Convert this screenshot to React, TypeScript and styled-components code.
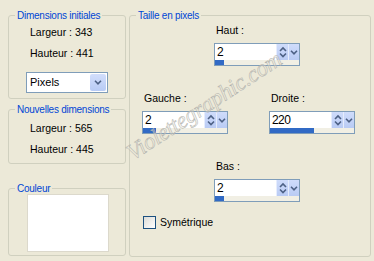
import React from 'react';
import styled, { createGlobalStyle } from 'styled-components';

const GlobalStyle = createGlobalStyle`
  html, body {
    margin: 0;
    padding: 0;
    background: #ece9d8;
  }

  body {
    width: 374px;
    height: 261px;
    overflow: hidden;
    font-family: "Liberation Sans", Arial, sans-serif;
    font-size: 10.5px;
    color: #000;
  }
`;

const Page = styled.div`
  position: relative;
  display: flex;
  gap: 3px;
  padding: 15px 0 0 8px;
  width: 374px;
  height: 261px;
  box-sizing: border-box;
`;

const Column = styled.div`
  display: flex;
  flex-direction: column;
  width: 118px;
`;

const Group = styled.div<{ $h: number; $w?: number; $mt?: number }>`
  box-sizing: border-box;
  width: ${({ $w }) => ($w ? `${$w}px` : '100%')};
  height: ${({ $h }) => $h}px;
  margin-top: ${({ $mt }) => $mt || 0}px;
  border: 1px solid #d0d0bf;
  border-radius: 3px;
  display: flex;
  flex-direction: column;
`;

const Legend = styled.div`
  align-self: flex-start;
  margin: -7px 0 0 6px;
  padding: 0 2px;
  line-height: 13px;
  font-size: 10px;
  letter-spacing: -0.25px;
  color: #0046d5;
  background: #ece9d8;
`;

const InfoList = styled.div<{ $mt: number }>`
  display: flex;
  flex-direction: column;
  gap: 8px;
  margin: ${({ $mt }) => $mt}px 0 0 21px;
  line-height: 13px;
`;

const Combo = styled.div`
  box-sizing: border-box;
  display: flex;
  width: 82px;
  height: 21px;
  margin: 12px 0 0 17px;
  border: 1px solid #7f9db9;
  background: #fff;
`;

const ComboText = styled.div`
  flex: 1;
  padding-left: 3px;
  line-height: 19px;
  font-size: 11px;
`;

const ComboButton = styled.div`
  width: 16px;
  margin: 1px;
  border-radius: 2px;
  background: linear-gradient(180deg, #d2defb 0%, #b8cbf5 100%);
  display: flex;
  align-items: center;
  justify-content: center;
`;

const Swatch = styled.div`
  box-sizing: border-box;
  width: 82px;
  height: 58px;
  margin: -1px 0 0 18px;
  background: #fff;
  border: 1px solid #dcd9cc;
`;

const Row = styled.div<{ $ml: number; $mt: number; $gap?: number }>`
  display: flex;
  align-items: center;
  gap: ${({ $gap }) => $gap || 0}px;
  margin: ${({ $mt }) => $mt}px 0 0 ${({ $ml }) => $ml}px;
`;

const Field = styled.div`
  display: flex;
  flex-direction: column;
  gap: 6px;
`;

const FieldLabel = styled.div`
  margin-left: 2px;
  line-height: 13px;
`;

const Spin = styled.div`
  box-sizing: border-box;
  width: 86px;
  height: 23px;
  border: 1px solid #7f9db9;
  display: flex;
  flex-direction: column;
`;

const SpinTop = styled.div`
  display: flex;
  height: 16px;
  background: #fff;
`;

const SpinValue = styled.div`
  flex: 1;
  padding-left: 2px;
  font-size: 12px;
  letter-spacing: -0.6px;
  line-height: 17px;
`;

const SpinButton = styled.div<{ $w: number }>`
  width: ${({ $w }) => $w}px;
  background: linear-gradient(180deg, #cfdcfb 0%, #b9cbf4 100%);
  border-left: 1px solid #e6edfd;
  display: flex;
  align-items: center;
  justify-content: center;
`;

const Track = styled.div`
  flex: 1;
  background: #f1efe4;
  display: flex;
`;

const Fill = styled.div`
  background: #316ac5;
`;

const CheckRow = styled.label`
  display: flex;
  align-items: center;
  gap: 4px;
  margin: 14px 0 0 13px;
  line-height: 13px;
`;

const CheckBox = styled.span`
  box-sizing: border-box;
  width: 13px;
  height: 13px;
  border: 1px solid #1c5180;
  background: linear-gradient(135deg, #dcdcd7 0%, #ffffff 100%);
`;

const Watermark = styled.div`
  position: absolute;
  left: 136px;
  top: 140px;
  transform-origin: left bottom;
  transform: rotate(-33deg);
  font-family: "Liberation Serif", serif;
  font-style: italic;
  font-size: 23px;
  letter-spacing: -0.3px;
  white-space: nowrap;
  color: rgba(236, 233, 216, 0.4);
  -webkit-text-stroke: 0.5px #b0b0ac;
  pointer-events: none;
`;

const Chevron = ({ dir }: { dir: 'up' | 'down' }) => (
  <svg width="8" height="5" viewBox="0 0 8 5">
    <path
      d={dir === 'up' ? 'M1 4.2 L4 1.2 L7 4.2' : 'M1 0.8 L4 3.8 L7 0.8'}
      fill="none"
      stroke="#4d6185"
      strokeWidth="1.6"
    />
  </svg>
);

const UpDown = () => (
  <svg width="8" height="12" viewBox="0 0 8 12">
    <path d="M1 5 L4 2 L7 5" fill="none" stroke="#4d6185" strokeWidth="1.6" />
    <path d="M1 7.5 L4 10.5 L7 7.5" fill="none" stroke="#4d6185" strokeWidth="1.6" />
  </svg>
);

const SpinField = ({ label, value, fill }: { label: string; value: string; fill: number }) => (
  <Field>
    <FieldLabel>{label}</FieldLabel>
    <Spin>
      <SpinTop>
        <SpinValue>{value}</SpinValue>
        <SpinButton $w={11}>
          <UpDown />
        </SpinButton>
        <SpinButton $w={10}>
          <Chevron dir="down" />
        </SpinButton>
      </SpinTop>
      <Track>
        <Fill style={{ width: fill }} />
      </Track>
    </Spin>
  </Field>
);

export default function App() {
  return (
    <>
      <GlobalStyle />
      <Page>
        <Column>
          <Group $h={84}>
            <Legend>Dimensions initiales</Legend>
            <InfoList $mt={4}>
              <span>Largeur : 343</span>
              <span>Hauteur : 441</span>
            </InfoList>
            <Combo>
              <ComboText>Pixels</ComboText>
              <ComboButton>
                <Chevron dir="down" />
              </ComboButton>
            </Combo>
          </Group>
          <Group $h={55} $mt={10}>
            <Legend>Nouvelles dimensions</Legend>
            <InfoList $mt={6}>
              <span>Largeur : 565</span>
              <span>Hauteur : 445</span>
            </InfoList>
          </Group>
          <Group $h={68} $mt={24}>
            <Legend>Couleur</Legend>
            <Swatch />
          </Group>
        </Column>
        <Group $h={242} $w={242}>
          <Legend>Taille en pixels</Legend>
          <Row $ml={84} $mt={2}>
            <SpinField label="Haut :" value="2" fill={9} />
          </Row>
          <Row $ml={12} $mt={26} $gap={41}>
            <SpinField label="Gauche :" value="2" fill={13} />
            <SpinField label="Droite :" value="220" fill={44} />
          </Row>
          <Row $ml={84} $mt={26}>
            <SpinField label="Bas :" value="2" fill={9} />
          </Row>
          <CheckRow>
            <CheckBox />
            <span>Symétrique</span>
          </CheckRow>
        </Group>
        <Watermark>Violettegraphic.com</Watermark>
      </Page>
    </>
  );
}
